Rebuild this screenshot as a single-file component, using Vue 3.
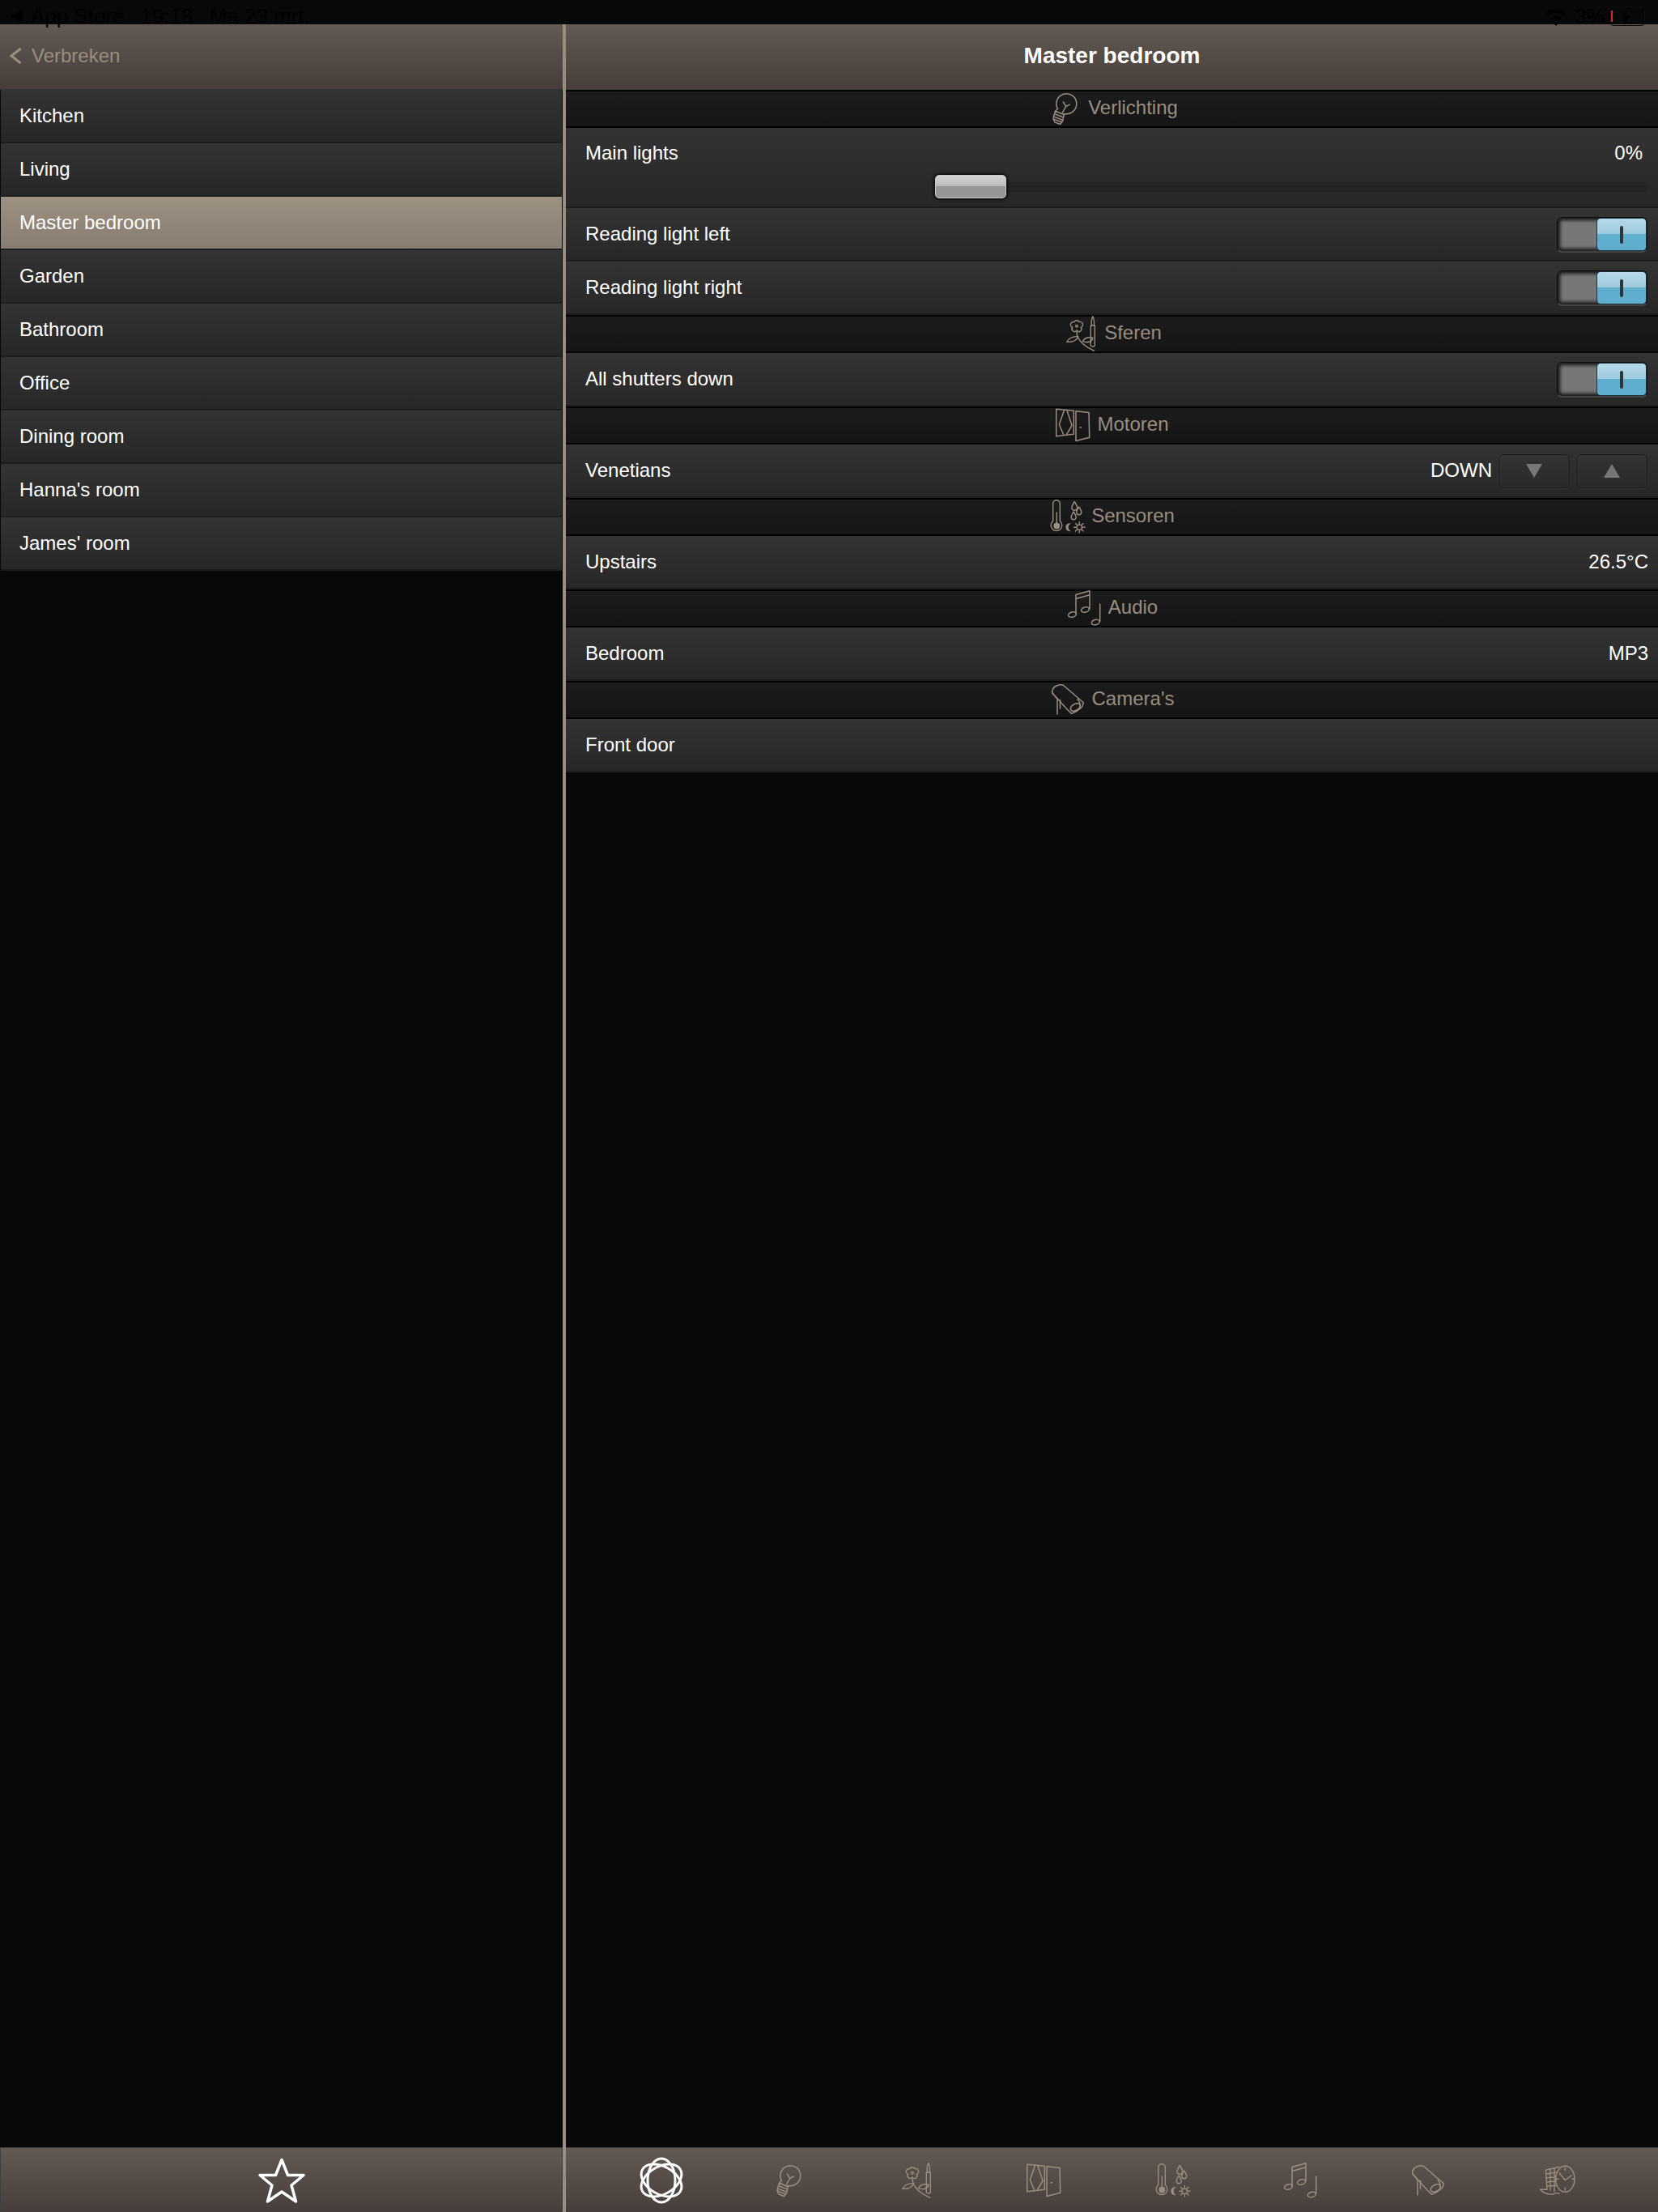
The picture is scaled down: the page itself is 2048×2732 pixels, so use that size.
<script setup>
const rooms = ['Kitchen', 'Living', 'Master bedroom', 'Garden', 'Bathroom', 'Office', 'Dining room', "Hanna's room", "James' room"]
const selected = 'Master bedroom'
const sections = [
  { icon: 'bulb', title: 'Verlichting', rows: [
    { type: 'slider', label: 'Main lights', value: '0%' },
    { type: 'toggle', label: 'Reading light left' },
    { type: 'toggle', label: 'Reading light right' },
  ] },
  { icon: 'flower', title: 'Sferen', rows: [{ type: 'toggle', label: 'All shutters down' }] },
  { icon: 'door', title: 'Motoren', rows: [{ type: 'buttons', label: 'Venetians', value: 'DOWN' }] },
  { icon: 'sensor', title: 'Sensoren', rows: [{ type: 'value', label: 'Upstairs', value: '26.5°C' }] },
  { icon: 'audio', title: 'Audio', rows: [{ type: 'value', label: 'Bedroom', value: 'MP3' }] },
  { icon: 'camera', title: "Camera's", rows: [{ type: 'value', label: 'Front door', value: '' }] },
]
const tabs = ['bulb', 'flower', 'door', 'sensor', 'audio', 'camera', 'clock']
</script>

<template>
  <div class="app">
    <svg class="sprite" aria-hidden="true">
      <symbol id="i-bulb" viewBox="0 0 48 44">
        <g fill="none" stroke="currentColor" stroke-width="1.5" stroke-linecap="round" stroke-linejoin="round">
          <path d="M14.5 22.5A12.5 12.5 0 1 1 22.5 28.4" />
          <path d="M24.7 19.5L21.3 13.8M24.7 19.5L29.3 17.2M24.7 19.5L20.3 27.2" />
          <path d="M14.5 22.5L11.5 25L22.5 30L22.5 28.4M11.5 25L10.5 28.5L21.5 33L22.5 30M10.5 28.5L9.5 32L21 36.5L21.5 33M9.5 32L9 35L19.5 39L21 36.5M9 35L11 39L17.5 41.5L19.5 39" />
        </g>
      </symbol>
      <symbol id="i-flower" viewBox="0 0 48 44">
        <g fill="none" stroke="currentColor" stroke-width="1.4" stroke-linecap="round" stroke-linejoin="round">
          <path d="M15.06 7.65A3.2 3.2 0 0 1 20.94 7.65A3.2 3.2 0 0 1 23.26 14.25A3.2 3.2 0 0 1 18 18.2A3.2 3.2 0 0 1 12.74 14.25A3.2 3.2 0 0 1 15.06 7.65z" />
          <circle cx="18" cy="12.7" r="1.3" />
          <path d="M18 18Q17 33 39.7 43.3" />
          <path d="M5.7 32.3Q10 25 19.7 25.7Q17 33 5.7 32.3z" />
          <path d="M25.3 31.7Q29 25 38 27.3Q36 35 25.3 31.7z" />
          <path d="M35.3 12H40.3V37Q38 39 35.3 37z" />
          <path d="M37.8 0.5Q35.3 6 36.5 12M37.8 0.5Q40.3 6 39.3 12" />
        </g>
      </symbol>
      <symbol id="i-door" viewBox="0 0 48 44">
        <g fill="none" stroke="currentColor" stroke-width="1.5" stroke-linejoin="round">
          <path d="M1.7 2.2L23.3 4.2V33.2L1.7 35.8z" />
          <path d="M11.7 3L5.3 21.5L11 34.5M15 4L21 22.5L14.3 33.8" />
          <path d="M26 4.8L42 6.5L42.7 37.2L26 41.5z" />
          <path d="M30.5 24.8H33" />
        </g>
      </symbol>
      <symbol id="i-sensor" viewBox="0 0 48 44">
        <g fill="none" stroke="currentColor" stroke-width="1.4" stroke-linecap="round" stroke-linejoin="round">
          <path d="M4.7 27.5V6a4.3 4.3 0 0 1 8.6 0V27.5a6.8 6.8 0 1 1-8.6 0z" />
          <path d="M9.3 17V33" />
          <circle cx="9.3" cy="33.5" r="3.2" fill="currentColor" />
          <path d="M31.3 3.5Q27.8 9 28 11a3.3 3.3 0 0 0 6.6 0Q34.8 9 31.3 3.5z" />
          <path d="M36.7 10Q33.5 15 33.7 16.8a3 3 0 0 0 6 0Q39.9 15 36.7 10z" />
          <path d="M30 16Q27 21 27.2 22.8a3 3 0 0 0 6 0Q33.3 21 30 16z" />
          <path d="M27 30.5a5 5 0 1 0 0 9.4a5 5 0 0 1 0-9.4z" fill="currentColor" stroke="none" />
          <circle cx="37.3" cy="35.2" r="3.2" />
          <path d="M37.3 28.5v2.2M37.3 39.7v2.2M30.6 35.2h2.2M41.8 35.2h2.2M32.5 30.4l1.6 1.6M40.5 38.4l1.6 1.6M32.5 40l1.6-1.6M40.5 32l1.6-1.6" />
        </g>
      </symbol>
      <symbol id="i-audio" viewBox="0 0 48 44">
        <g fill="none" stroke="currentColor" stroke-width="1.5" stroke-linecap="round" stroke-linejoin="round">
          <ellipse cx="7.5" cy="30" rx="5" ry="3.2" transform="rotate(-15 7.5 30)" />
          <ellipse cx="23.5" cy="24" rx="5" ry="3.2" transform="rotate(-15 23.5 24)" />
          <ellipse cx="36.3" cy="39.5" rx="5" ry="3.2" transform="rotate(-15 36.3 39.5)" />
          <path d="M12 29V5.5L29 0.8V23M12 10.5L29 5.8M41.7 38.5V17" />
        </g>
      </symbol>
      <symbol id="i-camera" viewBox="0 0 48 44">
        <g fill="none" stroke="currentColor" stroke-width="1.5" stroke-linecap="round" stroke-linejoin="round">
          <path d="M3 14.2Q1.5 8 8 5Q12.5 3 16.3 4.2L41.3 25.8L39.7 30.8Q34 37 26.3 39.2L21.3 34.2z" />
          <ellipse cx="31.3" cy="31.5" rx="6.5" ry="4" transform="rotate(-28 31.3 31.5)" />
          <path d="M9 21V40M12.5 22.5V33" />
          <path d="M3 14.2L9 21M34 21.5Q38 26 37 31" />
        </g>
      </symbol>
      <symbol id="i-clock" viewBox="0 0 48 44">
        <g fill="none" stroke="currentColor" stroke-width="1.4" stroke-linecap="round" stroke-linejoin="round">
          <ellipse cx="33.3" cy="20.3" rx="11.7" ry="16" />
          <path d="M26 12.7L33.3 21.7L41 16M33.3 6.5V9.5M33.3 31V34M22.5 20.3H25M42 20.3H44.5" />
          <path d="M9.3 9.3L26 5.3M9.3 9.3L11 33.3H2.7Q8 40 19 39Q20 37 26 38" />
          <path d="M10 14L22 12M10.3 19L21.7 17.5M10.6 24L21.7 23M10.8 29L22 28.5M15 8V34M20 7V36" />
        </g>
      </symbol>
    </svg>

    <div class="status">
      <div class="status-group">
        <svg class="status-back" viewBox="0 0 15 18"><path d="M15 0V18L0 9z" /></svg>
        <span>App Store</span>
        <span>19:18</span>
        <span>Ma 23 mrt.</span>
      </div>
      <div class="status-group status-right">
        <svg class="status-wifi" viewBox="0 0 28 24">
          <path d="M1 8.5Q14 -2 27 8.5L24 12Q14 4 4 12zM7 15Q14 8 21 15L18 18Q14 14 10 18zM14 24L11 20.5Q14 18 17 20.5z" />
        </svg>
        <span>3%</span>
        <div class="battery">
          <i class="battery-level"></i>
          <svg class="battery-bolt" viewBox="0 0 12 24"><path d="M8 0L0 14H5L3 24L12 9H6.5z" /></svg>
        </div>
      </div>
    </div>

    <div class="columns">
      <aside class="left">
        <header class="bar header header-left">
          <svg class="chevron" viewBox="0 0 17 22"><path d="M14.5 2L3 11L14.5 20" /></svg>
          <span class="back-label">Verbreken</span>
        </header>
        <nav class="fill">
          <div v-for="room in rooms" :key="room" class="row" :class="{ active: room === selected }">{{ room }}</div>
        </nav>
        <footer class="bar tabbar tabbar-left">
          <svg class="star" viewBox="0 0 60 60">
            <path d="M30 4.5L37.5 23.5H57L42 36L47.5 56L30 44L12.5 56L18 36L3 23.5H22.5z" />
          </svg>
        </footer>
      </aside>

      <main class="right">
        <header class="bar header header-title">Master bedroom</header>
        <div class="fill">
          <section v-for="section in sections" :key="section.title">
            <div class="section-head">
              <svg class="icon"><use :href="'#i-' + section.icon" /></svg>
              <span class="section-title">{{ section.title }}</span>
            </div>
            <template v-for="row in section.rows" :key="row.label">
              <div v-if="row.type === 'slider'" class="row row-slider">
                <div class="row-line">
                  <span>{{ row.label }}</span>
                  <span>{{ row.value }}</span>
                </div>
                <div class="track"><div class="thumb"></div></div>
              </div>
              <div v-else class="row">
                <span class="grow">{{ row.label }}</span>
                <div v-if="row.type === 'toggle'" class="toggle"><div class="knob"></div></div>
                <template v-else-if="row.type === 'buttons'">
                  <span class="state">{{ row.value }}</span>
                  <button class="step"><i class="tri tri-down"></i></button>
                  <button class="step"><i class="tri tri-up"></i></button>
                </template>
                <span v-else>{{ row.value }}</span>
              </div>
            </template>
          </section>
        </div>
        <footer class="bar tabbar tabbar-right">
          <div class="tab">
            <svg class="atom" viewBox="0 0 60 60">
              <g fill="none" stroke="#fff" stroke-width="3">
                <ellipse cx="30" cy="30" rx="17" ry="27" />
                <ellipse cx="30" cy="30" rx="17" ry="27" transform="rotate(60 30 30)" />
                <ellipse cx="30" cy="30" rx="17" ry="27" transform="rotate(120 30 30)" />
              </g>
            </svg>
          </div>
          <div v-for="tab in tabs" :key="tab" class="tab">
            <svg class="icon"><use :href="'#i-' + tab" /></svg>
          </div>
        </footer>
      </main>
    </div>
  </div>
</template>

<style>
html, body { background: #080808; }
</style>

<style scoped>
.app {
  position: relative;
  width: 2048px;
  height: 2732px;
  padding-top: 30px;
  box-sizing: border-box;
  background: #080808;
  color: #fff;
  font-family: "Liberation Sans", Arial, sans-serif;
  font-size: 24px;
}
.sprite { position: absolute; width: 0; height: 0; }

.status {
  position: absolute;
  z-index: 2;
  top: 0;
  left: 0;
  right: 0;
  height: 34px;
  padding: 4px 16px 0 13px;
  box-sizing: border-box;
  display: flex;
  justify-content: space-between;
  overflow: hidden;
  color: #000;
  font-size: 26px;
  line-height: 32px;
  pointer-events: none;
}
.status-group { display: flex; align-items: flex-start; gap: 20px; }
.status-back { width: 15px; height: 18px; margin: 7px -10px 0 0; fill: #000; }
.status-right { gap: 9px; }
.status-wifi { width: 28px; height: 24px; margin-top: 4px; fill: #000; }
.battery {
  position: relative;
  width: 43px;
  height: 24px;
  margin: 4px 0 0 -3px;
  border: 1px solid #0e0e0e;
  border-radius: 4px;
  box-sizing: border-box;
}
.battery-level { position: absolute; left: 0; top: 4px; width: 2px; height: 14px; background: #d8302a; }
.battery-bolt { position: absolute; left: 12px; top: 3px; width: 12px; height: 20px; fill: #000; }

.columns { display: flex; height: 2702px; }
.left { width: 699px; flex: none; display: flex; flex-direction: column; border-right: 4px solid #9a8e80; box-sizing: border-box; }
.right { flex: 1; min-width: 0; display: flex; flex-direction: column; }
.fill { flex: 1; min-height: 0; }

.bar { background: linear-gradient(#635a53, #473d3a); flex: none; }
.header { height: 81px; display: flex; align-items: center; box-sizing: border-box; padding-bottom: 2px; }
.header-left { border-bottom: 1px solid #333; }
.header-title { justify-content: center; font-size: 28px; font-weight: 700; padding-bottom: 3px; }
.chevron { width: 17px; height: 22px; margin-left: 11px; fill: none; stroke: #9a8e80; stroke-width: 3; }
.back-label { margin-left: 11px; color: #9a8e80; }

.row {
  height: 66px;
  box-sizing: border-box;
  display: flex;
  align-items: center;
  padding: 0 12px 2px 24px;
  background: linear-gradient(#333, #272727);
  border-top: 1px solid #353535;
  border-bottom: 2px solid #1d1d1d;
}
nav .row { margin: 0 1px; padding-left: 23px; }
.row.active { background: linear-gradient(#9c9080, #877d71); border-top-color: #9c9080; }
.grow { flex: 1; }

.section-head {
  height: 47px;
  box-sizing: border-box;
  display: flex;
  align-items: center;
  justify-content: center;
  gap: 4px;
  padding-bottom: 2px;
  color: #9a8e80;
  background: linear-gradient(#1c1c1c, #151515);
  border-top: 2px solid #000;
  border-bottom: 2px solid #000;
}
.section-title { padding-bottom: 1px; }
.icon { width: 48px; height: 44px; flex: none; color: #9a8e80; overflow: visible; }

.row-slider { height: 99px; flex-direction: column; align-items: stretch; padding-bottom: 0; }
.row-line { height: 60px; display: flex; align-items: center; justify-content: space-between; padding-right: 7px; }
.track { position: relative; height: 12px; margin: 6px 0 0 432px; border-radius: 6px; background: #242424; }
.thumb {
  position: absolute;
  left: 0;
  top: -9px;
  width: 88px;
  height: 29px;
  box-sizing: border-box;
  border: 1px solid #c8c8c8;
  border-radius: 5px;
  background: linear-gradient(#d4d4d4, #bababa 50%, #969696 50%, #969696);
  box-shadow: 0 0 4px 1px #000;
}

.toggle {
  width: 112px;
  height: 44px;
  margin: 2px 1px 0 0;
  box-sizing: border-box;
  display: flex;
  justify-content: flex-end;
  background: #777;
  border: 1px solid #0c0c0c;
  border-bottom: 2px solid #444;
  border-radius: 6px;
  box-shadow: inset 0 0 4px 3px #161616;
}
.knob {
  position: relative;
  width: 62px;
  height: 41px;
  box-sizing: border-box;
  border-radius: 5px;
  border: 1px solid #1b3542;
  background: linear-gradient(#b6d9e8, #9ccadd 50%, #60aecd 50%, #60aecd);
}
.knob::after {
  content: "";
  position: absolute;
  left: 28px;
  top: 9px;
  width: 4px;
  height: 22px;
  border-radius: 2px;
  background: #2f3438;
}

.state { margin-right: 8px; }
.step {
  width: 88px;
  height: 42px;
  margin-top: 2px;
  padding: 0;
  display: flex;
  align-items: center;
  justify-content: center;
  background: linear-gradient(#333, #2a2a2a);
  border: 1px solid #1c1c1c;
  border-radius: 6px;
  box-shadow: 0 0 0 1px #333;
}
.step + .step { margin-left: 8px; margin-right: 1px; }
.tri { width: 0; height: 0; border-left: 10px solid transparent; border-right: 10px solid transparent; }
.tri-down { border-top: 17px solid #777; }
.tri-up { border-bottom: 17px solid #777; }

.tabbar { height: 80px; box-sizing: border-box; border-top: 1px solid #3e3e3e; display: flex; align-items: center; }
.tabbar-left { justify-content: center; border-left: 1px solid #3e3e3e; border-right: 1px solid #3e3e3e; }
.star { width: 60px; height: 60px; fill: none; stroke: #fff; stroke-width: 3.5; stroke-linejoin: round; }
.tabbar-right { padding: 0 45px 0 39px; }
.tab { flex: 1; display: flex; justify-content: center; align-items: center; }
.atom { width: 60px; height: 60px; }
</style>
